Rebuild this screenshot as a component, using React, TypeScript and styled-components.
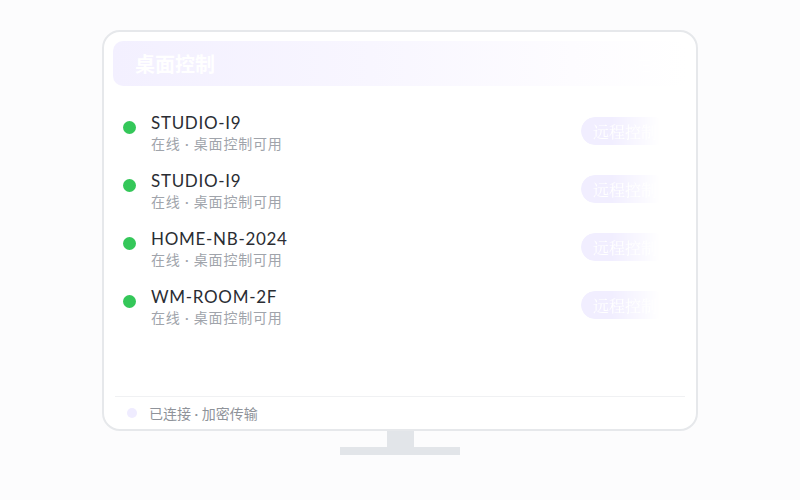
import React from "react";
import styled, { createGlobalStyle } from "styled-components";

const GlobalStyle = createGlobalStyle`
  html, body {
    margin: 0;
    padding: 0;
    background: #fcfcfd;
    font-family: Lato, "Noto Sans CJK SC", sans-serif;
  }
  * {
    box-sizing: border-box;
  }
`;

const Page = styled.div`
  width: 800px;
  height: 500px;
  display: flex;
  flex-direction: column;
  align-items: center;
  padding-top: 30px;
`;

const Monitor = styled.div`
  width: 596px;
  height: 401px;
  background: #ffffff;
  border: 2px solid #e6e8eb;
  border-radius: 18px;
  padding: 9px 9px 0 9px;
  display: flex;
  flex-direction: column;
`;

const Neck = styled.div`
  width: 27px;
  height: 16px;
  background: #e2e5e9;
`;

const Base = styled.div`
  width: 120px;
  height: 8px;
  background: #e2e5e9;
`;

const Header = styled.div`
  height: 45px;
  border-radius: 10px;
  background: linear-gradient(
    90deg,
    #f3f0ff 0%,
    #f8f6ff 45%,
    #fdfcff 80%,
    rgba(255, 255, 255, 0) 100%
  );
  display: flex;
  align-items: center;
  justify-content: space-between;
  padding: 0 10px 0 22px;
`;

const Title = styled.h1`
  margin: 0;
  font-size: 20px;
  font-weight: 700;
  color: #ffffff;
`;

const HeaderNote = styled.span`
  font-size: 14px;
  color: #ffffff;
`;

const List = styled.div`
  flex: 1;
  display: flex;
  flex-direction: column;
  gap: 16px;
  padding: 26px 0 0 10px;
`;

const Row = styled.div`
  display: flex;
  align-items: center;
  height: 42px;
`;

const Dot = styled.span<{ color: string; size: number }>`
  width: ${(p) => p.size}px;
  height: ${(p) => p.size}px;
  border-radius: 50%;
  background: ${(p) => p.color};
  flex-shrink: 0;
`;

const RowDot = styled(Dot)`
  margin-top: -12px;
`;

const Info = styled.div`
  flex: 1;
  display: flex;
  flex-direction: column;
  margin-left: 15px;
`;

const Name = styled.span`
  font-size: 17px;
  line-height: 22px;
  letter-spacing: 0.7px;
  color: #2a2d33;
`;

const Sub = styled.span`
  font-size: 14px;
  line-height: 20px;
  letter-spacing: 0.8px;
  color: #a0a4ab;
`;

const ControlButton = styled.button`
  height: 28px;
  padding: 0 12px;
  margin-right: 18px;
  margin-top: -4px;
  border: none;
  border-radius: 14px;
  background: #f1eeff;
  color: #ffffff;
  font-family: "Liberation Serif", "Noto Serif CJK SC", serif;
  font-size: 16px;
  white-space: nowrap;
  -webkit-mask-image: linear-gradient(90deg, #000 35%, transparent 90%);
  mask-image: linear-gradient(90deg, #000 35%, transparent 90%);
`;

const Footer = styled.div`
  height: 33px;
  margin: 0 2px;
  border-top: 1px solid #f0f1f3;
  display: flex;
  align-items: center;
  gap: 12px;
  padding-left: 12px;
`;

const FooterText = styled.span`
  font-size: 14px;
  color: #8f939a;
`;

const devices = ["STUDIO-I9", "STUDIO-I9", "HOME-NB-2024", "WM-ROOM-2F"];

export default function App() {
  return (
    <>
      <GlobalStyle />
      <Page>
        <Monitor>
          <Header>
            <Title>桌面控制</Title>
            <HeaderNote>在线 4</HeaderNote>
          </Header>
          <List>
            {devices.map((name, i) => (
              <Row key={i}>
                <RowDot color="#34c759" size={13} />
                <Info>
                  <Name>{name}</Name>
                  <Sub>在线 · 桌面控制可用</Sub>
                </Info>
                <ControlButton>远程控制</ControlButton>
              </Row>
            ))}
          </List>
          <Footer>
            <Dot color="#efecff" size={10} />
            <FooterText>已连接 · 加密传输</FooterText>
          </Footer>
        </Monitor>
        <Neck />
        <Base />
      </Page>
    </>
  );
}
